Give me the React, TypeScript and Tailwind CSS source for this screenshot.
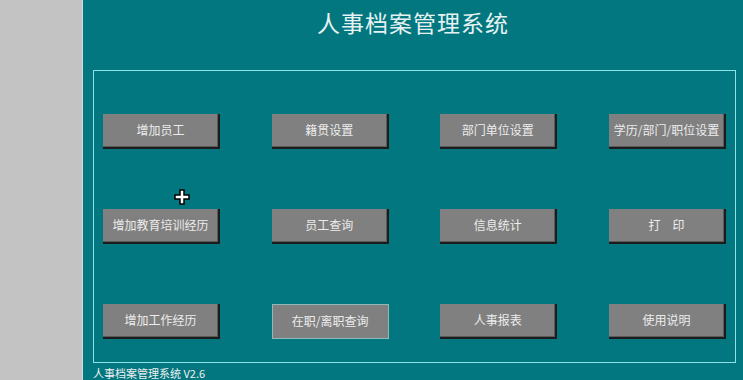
const rows: string[][] = [
  ['增加员工', '籍贯设置', '部门单位设置', '学历/部门/职位设置'],
  ['增加教育培训经历', '员工查询', '信息统计', '打　印'],
  ['增加工作经历', '在职/离职查询', '人事报表', '使用说明'],
];

function MenuButton({ label, focused }: { label: string; focused?: boolean }) {
  return (
    <button
      className={`w-[117px] h-[35px] bg-[#808080] text-[12px] text-[#ececec] flex items-center justify-center whitespace-nowrap ${
        focused
          ? 'border border-[#8fb8bb] shadow-none'
          : 'border-r-2 border-b-2 border-[#1c1c1c] shadow-[inset_-1px_-1px_0_#5a5a5a]'
      }`}
    >
      {label}
    </button>
  );
}

export default function App() {
  return (
    <div
      className="flex w-[743px] h-[380px] overflow-hidden"
      style={{ fontFamily: '"Noto Sans CJK SC", "DejaVu Sans", sans-serif' }}
    >
      <div className="w-[83px] h-full bg-[#c3c3c3] border-r border-[#d8d8d8]" />
      <div className="relative flex-1 h-full bg-[#03777f] flex flex-col">
        <div className="h-[70px] flex justify-center pt-[6px]">
          <h1 className="text-[23px] leading-[32px] tracking-[1px] text-[#e6f2f2]">人事档案管理系统</h1>
        </div>
        <div className="ml-[10px] mr-[7px] h-[294px] border border-[#8fe3e6] px-[9px] pt-[43px] flex flex-col gap-[60px]">
          {rows.map((row, i) => (
            <div key={i} className="flex justify-between">
              {row.map((label) => (
                <MenuButton key={label} label={label} focused={label === '在职/离职查询'} />
              ))}
            </div>
          ))}
        </div>
        <div className="ml-[10px] mt-[3px] text-[11px] leading-[14px] text-[#f0f0f0]">
          人事档案管理系统 V2.6
        </div>
        <svg
          className="absolute left-[91px] top-[189px]"
          width="16"
          height="16"
          viewBox="0 0 16 16"
        >
          <path
            d="M6 1h4v5h5v4h-5v5H6v-5H1V6h5z"
            fill="#fff"
            stroke="#000"
            strokeWidth="1.5"
          />
        </svg>
      </div>
    </div>
  );
}
